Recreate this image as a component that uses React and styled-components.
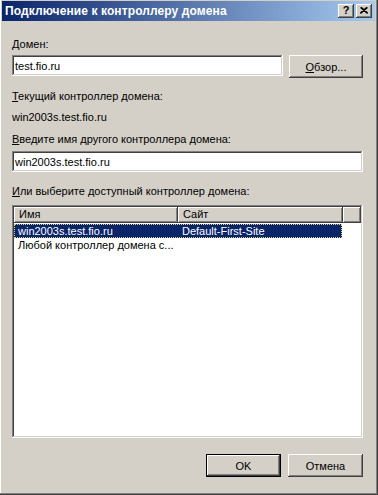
import React from 'react'
import styled, { createGlobalStyle } from 'styled-components'

const GlobalStyle = createGlobalStyle`
  html, body {
    margin: 0;
    padding: 0;
    background: #d4d0c8;
  }
  * {
    box-sizing: border-box;
  }
`

const raised = `
  box-shadow: inset -1px -1px #404040, inset 1px 1px #ffffff,
    inset -2px -2px #808080, inset 2px 2px #d4d0c8;
`
const sunken = `
  box-shadow: inset -1px -1px #ffffff, inset 1px 1px #808080,
    inset -2px -2px #d4d0c8, inset 2px 2px #404040;
`

const Window = styled.div`
  width: 378px;
  height: 495px;
  display: flex;
  flex-direction: column;
  padding: 1px 3px 4px 2px;
  background: #d4d0c8;
  box-shadow: inset -1px -1px #404040, inset -2px -2px #808080,
    inset 1px 0 #ffffff;
  font-family: 'Liberation Sans', Arial, sans-serif;
  font-size: 11px;
  color: #000;
`

const TitleBar = styled.div`
  height: 20px;
  display: flex;
  align-items: center;
  padding: 0 3px 0 3px;
  background: linear-gradient(to right, #0a246a, #a6caf0);
`

const Title = styled.span`
  flex: 1;
  color: #fff;
  font-weight: bold;
  font-size: 12px;
  letter-spacing: 0.1px;
`

const CaptionButton = styled.div`
  width: 16px;
  height: 14px;
  margin-left: ${(p) => p.gap || 0}px;
  display: flex;
  align-items: center;
  justify-content: center;
  background: #d4d0c8;
  font-weight: bold;
  font-size: 11px;
  line-height: 1;
  padding-bottom: 1px;
  ${raised}
`

const Body = styled.div`
  flex: 1;
  display: flex;
  flex-direction: column;
  padding: 0 12px 0 10px;
`

const Label = styled.div`
  height: 13px;
  line-height: 13px;
  margin-top: ${(p) => p.mt}px;
  white-space: nowrap;
`

const Key = styled.span`
  text-decoration: underline;
  text-underline-offset: 1px;
`

const Row = styled.div`
  display: flex;
  gap: 6px;
  margin-top: ${(p) => p.mt}px;
`

const Field = styled.div`
  flex: 1;
  height: 21px;
  display: flex;
  align-items: center;
  padding: 0 3px;
  background: #fff;
  ${sunken}
`

const Button = styled.div`
  width: ${(p) => p.w || 75}px;
  height: 23px;
  display: flex;
  align-items: center;
  justify-content: center;
  background: #d4d0c8;
  ${raised}
  ${(p) =>
    p.primary &&
    `
    border: 1px solid #000;
    box-shadow: inset -1px -1px #404040, inset 1px 1px #ffffff,
      inset -2px -2px #808080, inset 2px 2px #d4d0c8;
  `}
`

const ListView = styled.div`
  margin-top: 7px;
  height: 233px;
  padding: 2px;
  background: #fff;
  ${sunken}
  display: flex;
  flex-direction: column;
`

const Header = styled.div`
  display: flex;
  height: 16px;
  background: #d4d0c8;
`

const HeaderCell = styled.div`
  width: ${(p) => p.w}px;
  flex: ${(p) => (p.w ? 'none' : 1)};
  padding-left: 5px;
  line-height: 15px;
  ${raised}
`

const ListRow = styled.div`
  display: flex;
  width: 328px;
  height: 14px;
  line-height: 14px;
  margin-top: ${(p) => p.mt || 0}px;
  ${(p) =>
    p.selected &&
    `
    background: #0a246a;
    color: #fff;
    outline: 1px dotted #d8d080;
    outline-offset: -1px;
  `}
`

const Cell = styled.div`
  width: ${(p) => p.w}px;
  padding-left: 4px;
  white-space: nowrap;
`

const Footer = styled.div`
  display: flex;
  justify-content: flex-end;
  gap: 7px;
  margin-top: 16px;
  padding-right: 0;
`

const CloseIcon = () => (
  <svg width="8" height="7" viewBox="0 0 8 7">
    <path d="M0.5 0.5 L7.5 6.5 M1.5 0.5 L8 6.2 M7.5 0.5 L0.5 6.5 M6.5 0.5 L0 6.2" stroke="#000" strokeWidth="1.1" />
  </svg>
)

export default function App() {
  return (
    <>
      <GlobalStyle />
      <Window>
        <TitleBar>
          <Title>Подключение к контроллеру домена</Title>
          <CaptionButton>?</CaptionButton>
          <CaptionButton gap={2}>
            <CloseIcon />
          </CaptionButton>
        </TitleBar>
        <Body>
          <Label mt={17}>
            <Key>Д</Key>омен:
          </Label>
          <Row mt={4}>
            <Field>test.fio.ru</Field>
            <Button w={74}>
              <span>
                <Key>О</Key>бзор...
              </span>
            </Button>
          </Row>
          <Label mt={12}>
            <Key>Т</Key>екущий контроллер домена:
          </Label>
          <Label mt={8}>win2003s.test.fio.ru</Label>
          <Label mt={9}>
            <Key>В</Key>ведите имя другого контроллера домена:
          </Label>
          <Row mt={5}>
            <Field>win2003s.test.fio.ru</Field>
          </Row>
          <Label mt={13}>
            <Key>И</Key>ли выберите доступный контроллер домена:
          </Label>
          <ListView>
            <Header>
              <HeaderCell w={164}>Имя</HeaderCell>
              <HeaderCell w={165}>Сайт</HeaderCell>
              <HeaderCell />
            </Header>
            <ListRow selected mt={1}>
              <Cell w={164}>win2003s.test.fio.ru</Cell>
              <Cell w={164}>Default-First-Site</Cell>
            </ListRow>
            <ListRow>
              <Cell w={328}>Любой контроллер домена с...</Cell>
            </ListRow>
          </ListView>
          <Footer>
            <Button primary>OK</Button>
            <Button>Отмена</Button>
          </Footer>
        </Body>
      </Window>
    </>
  )
}
